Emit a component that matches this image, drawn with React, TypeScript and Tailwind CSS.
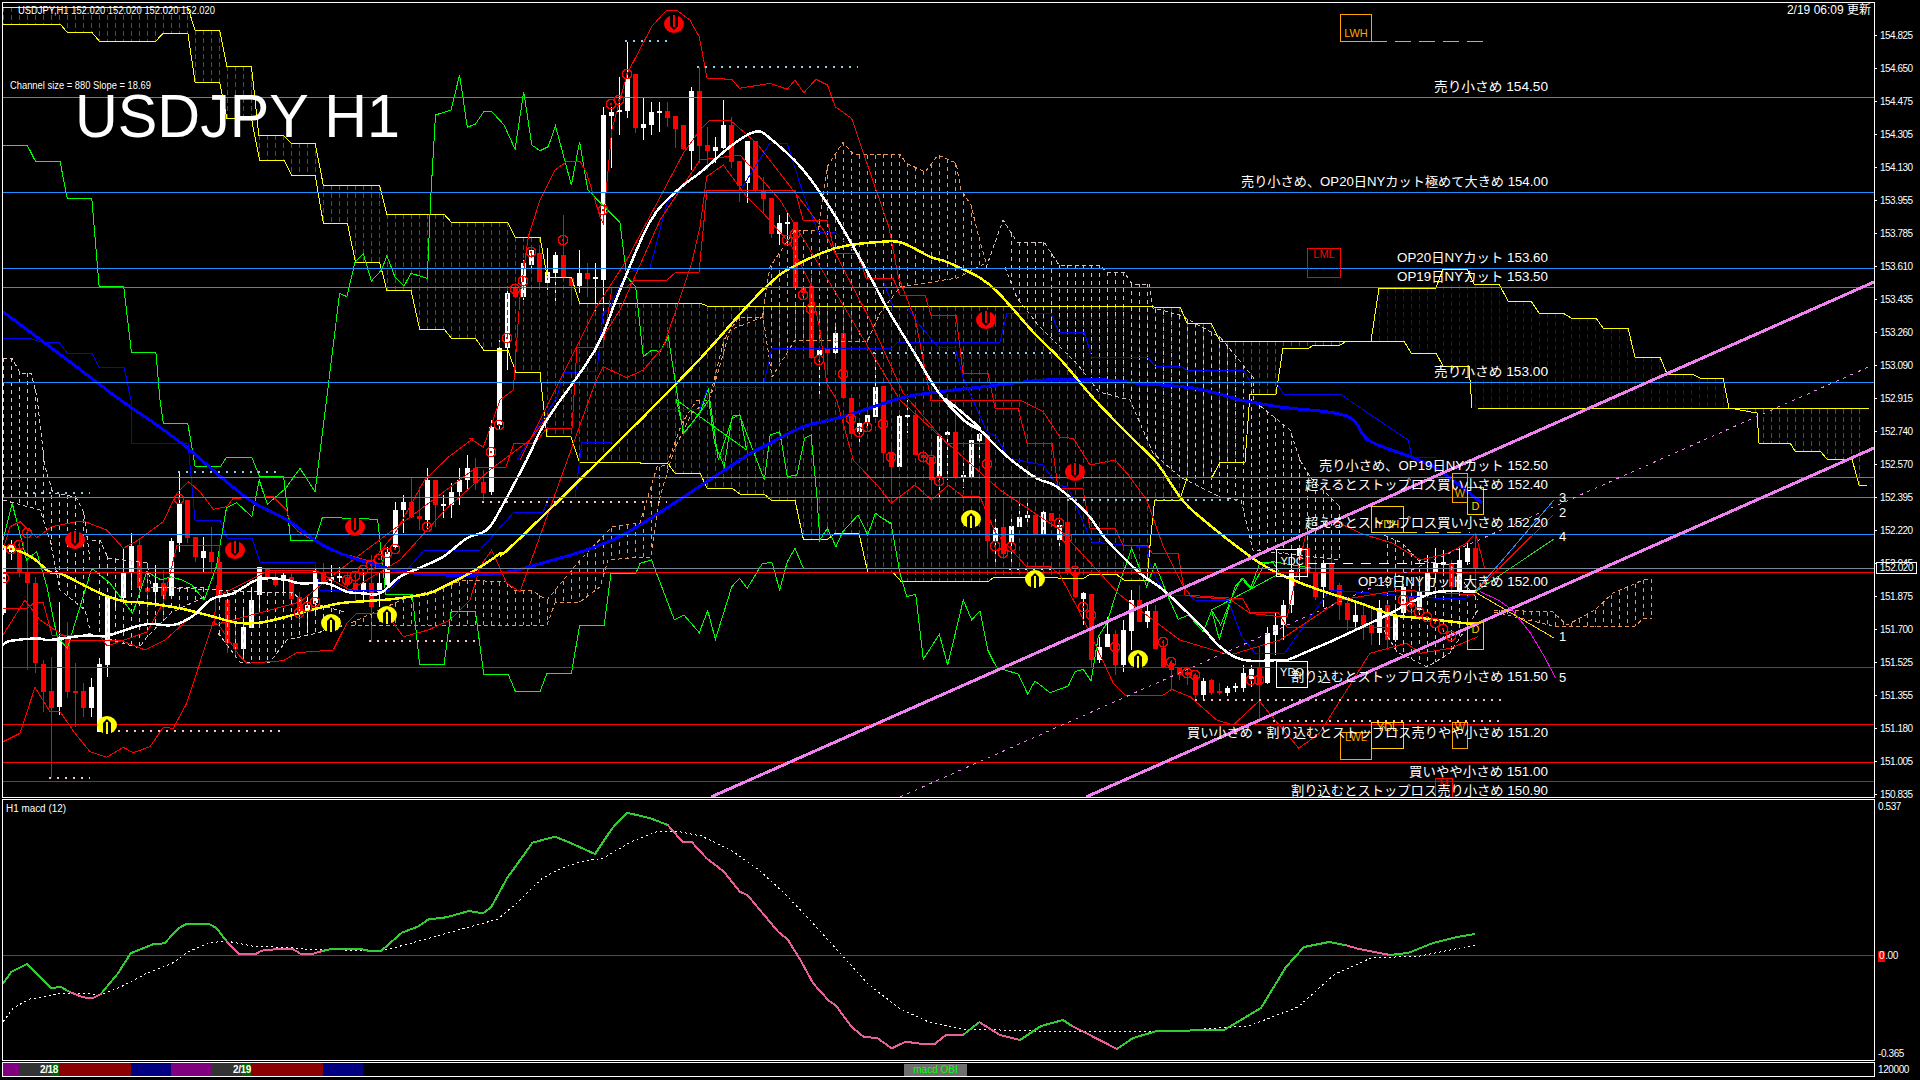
import React from "react";

type P = [number, number];

// the chart was read off crops of the screenshot, so the points stay in crop coordinates
const conv = (ox: number, oy: number, sx: number, n: number[]): P[] => {
  const out: P[] = [];
  for (let i = 0; i < n.length; i += 2) out.push([ox + n[i] / sx, oy + n[i + 1] / 3]);
  return out;
};
const z1 = (...n: number[]) => conv(0, 0, 2.45, n);
const z3 = (...n: number[]) => conv(1200, 440, 2.178, n);
const z6 = (...n: number[]) => conv(0, 400, 2.45, n);
const z7 = (...n: number[]) => conv(640, 0, 2.613, n);
const z8 = (...n: number[]) => conv(640, 400, 2.613, n);
const z9 = (...n: number[]) => conv(0, 470, 3, n);
const z10 = (...n: number[]) => conv(470, 30, 3, n);
const z11 = (...n: number[]) => conv(880, 400, 3, n);
const z12 = (...n: number[]) => conv(0, 800, 1.568, n);

const str = (p: P[]) => p.map(([x, y]) => `${x.toFixed(1)},${y.toFixed(1)}`).join(" ");

const interp = (p: P[], x: number) => {
  if (x <= p[0][0]) return p[0][1];
  for (let i = 1; i < p.length; i++) {
    if (x <= p[i][0]) {
      const [x0, y0] = p[i - 1];
      const [x1, y1] = p[i];
      return x1 === x0 ? y1 : y0 + ((y1 - y0) * (x - x0)) / (x1 - x0);
    }
  }
  return p[p.length - 1][1];
};

// moving averages are curves, so round off the digitised corners
const smooth = (p: P[]): P[] => {
  const out: P[] = [];
  for (let i = 0; i < p.length - 1; i++) {
    const a = p[Math.max(i - 1, 0)];
    const b = p[i];
    const c = p[i + 1];
    const d = p[Math.min(i + 2, p.length - 1)];
    for (let k = 0; k < 4; k++) {
      const t = k / 4;
      const f = (u: number, v: number, w: number, z: number) =>
        0.5 * (2 * v + (w - u) * t + (2 * u - 5 * v + 4 * w - z) * t * t + (3 * v - u - 3 * w + z) * t * t * t);
      out.push([f(a[0], b[0], c[0], d[0]), f(a[1], b[1], c[1], d[1])]);
    }
  }
  out.push(p[p.length - 1]);
  return out;
};

// x, body top, body bottom, high, low, 1 = white
const candles: number[][] = [
  [3, 547, 613, 545, 615, 1], [11, 545, 552, 540, 560, 1], [19, 548, 572, 542, 577, 0], [27, 573, 583, 530, 670, 0],
  [35, 583, 663, 577, 673, 0], [43, 664, 692, 660, 712, 0], [51, 691, 708, 657, 778, 0], [59, 637, 707, 602, 715, 1],
  [67, 638, 692, 622, 698, 0], [75, 691, 693, 663, 727, 0], [83, 691, 708, 683, 717, 0], [91, 687, 708, 678, 717, 1],
  [99, 664, 732, 658, 732, 1], [107, 597, 665, 597, 677, 1], [115, 598, 600, 590, 610, 1], [123, 572, 598, 548, 600, 1],
  [131, 546, 573, 533, 590, 1], [139, 545, 588, 540, 592, 0], [147, 588, 592, 575, 610, 0], [155, 583, 592, 565, 603, 1],
  [163, 583, 596, 570, 620, 0], [171, 541, 596, 538, 597, 1], [179, 503, 543, 472, 552, 1], [187, 500, 538, 500, 543, 0],
  [195, 537, 557, 537, 562, 0], [203, 551, 558, 537, 573, 1], [211, 552, 562, 527, 573, 0], [219, 562, 598, 558, 603, 0],
  [227, 600, 643, 600, 653, 0], [235, 643, 649, 625, 658, 0], [243, 627, 649, 610, 656, 1], [251, 600, 628, 587, 628, 1],
  [259, 567, 595, 567, 610, 1], [267, 568, 577, 568, 582, 0], [275, 577, 585, 570, 587, 0], [283, 575, 581, 572, 592, 1],
  [291, 577, 599, 573, 600, 0], [299, 597, 615, 592, 625, 0], [307, 605, 612, 597, 633, 1], [315, 571, 603, 563, 613, 1],
  [323, 572, 582, 563, 585, 0], [331, 577, 581, 565, 592, 1], [339, 576, 578, 567, 582, 1], [347, 577, 585, 573, 587, 0],
  [355, 583, 590, 573, 602, 0], [363, 583, 591, 572, 603, 1], [371, 583, 607, 555, 642, 0], [379, 583, 592, 573, 607, 1],
  [387, 552, 585, 547, 587, 1], [395, 510, 547, 502, 550, 1], [403, 502, 510, 495, 533, 1], [411, 502, 517, 477, 518, 0],
  [419, 516, 519, 487, 530, 0], [427, 480, 520, 468, 530, 1], [435, 480, 505, 480, 527, 0], [443, 504, 506, 495, 518, 1],
  [451, 492, 505, 483, 518, 1], [459, 480, 492, 468, 505, 1], [467, 468, 480, 455, 490, 1], [475, 468, 483, 458, 490, 0],
  [483, 482, 493, 470, 500, 0], [491, 427, 492, 420, 495, 1], [499, 348, 425, 340, 430, 1], [507, 293, 348, 290, 370, 1],
  [515, 287, 297, 283, 297, 0], [523, 263, 297, 260, 300, 1], [531, 250, 265, 247, 272, 1], [539, 253, 282, 250, 290, 0],
  [547, 272, 283, 248, 290, 1], [555, 255, 273, 252, 303, 1], [563, 255, 278, 215, 279, 0], [571, 278, 286, 277, 305, 0],
  [579, 273, 286, 250, 293, 1], [587, 273, 279, 263, 297, 0], [595, 277, 279, 263, 313, 1], [603, 115, 280, 107, 313, 1],
  [611, 112, 116, 107, 168, 1], [619, 110, 112, 77, 135, 1], [627, 78, 111, 42, 118, 1], [635, 74, 128, 74, 133, 0],
  [643, 124, 128, 98, 140, 1], [651, 112, 125, 102, 135, 1], [659, 111, 113, 102, 132, 1], [667, 111, 118, 102, 127, 0],
  [675, 116, 129, 116, 148, 0], [683, 125, 149, 125, 150, 0], [691, 91, 151, 87, 170, 1], [699, 91, 146, 67, 163, 0],
  [707, 145, 151, 127, 170, 0], [715, 147, 151, 137, 163, 1], [723, 125, 148, 100, 149, 1], [731, 125, 162, 117, 168, 0],
  [739, 161, 186, 161, 202, 0], [747, 141, 183, 141, 203, 1], [755, 141, 191, 141, 192, 0], [763, 191, 199, 177, 213, 0],
  [771, 198, 234, 198, 238, 0], [779, 223, 234, 215, 245, 1], [787, 222, 224, 212, 242, 1], [795, 222, 287, 222, 287, 0],
  [803, 287, 293, 287, 300, 0], [811, 286, 358, 275, 358, 0], [819, 350, 355, 348, 398, 1], [827, 349, 353, 332, 375, 0],
  [835, 333, 353, 322, 355, 1], [843, 333, 398, 313, 398, 0], [851, 398, 434, 398, 434, 0], [859, 423, 432, 420, 442, 1],
  [867, 415, 423, 408, 430, 1], [875, 387, 417, 353, 417, 1], [883, 386, 453, 386, 458, 0], [891, 452, 467, 447, 490, 0],
  [899, 416, 467, 413, 468, 1], [907, 415, 417, 400, 433, 1], [915, 415, 455, 415, 455, 0], [923, 455, 458, 452, 460, 0],
  [931, 457, 480, 457, 492, 0], [939, 436, 478, 436, 498, 1], [947, 432, 435, 428, 480, 1], [955, 432, 477, 413, 478, 0],
  [963, 475, 478, 463, 488, 1], [971, 440, 477, 440, 478, 1], [979, 434, 441, 433, 460, 1], [987, 435, 541, 435, 555, 0],
  [995, 528, 541, 515, 562, 1], [1003, 527, 554, 502, 555, 0], [1011, 526, 543, 515, 567, 1], [1019, 517, 527, 503, 527, 1],
  [1027, 515, 518, 503, 527, 1], [1035, 515, 535, 515, 535, 0], [1043, 512, 535, 507, 535, 1], [1051, 513, 521, 513, 521, 0],
  [1059, 525, 540, 520, 548, 1], [1067, 522, 573, 503, 573, 0], [1075, 572, 597, 568, 598, 0], [1083, 593, 599, 592, 625, 1],
  [1091, 594, 660, 594, 667, 0], [1099, 647, 660, 637, 663, 1], [1107, 634, 647, 617, 647, 1], [1115, 634, 665, 630, 675, 0],
  [1123, 630, 665, 620, 672, 1], [1131, 600, 631, 590, 650, 1], [1139, 600, 622, 585, 622, 0], [1147, 611, 622, 605, 628, 1],
  [1155, 611, 649, 605, 649, 0], [1163, 648, 667, 640, 668, 0], [1171, 663, 670, 660, 690, 0], [1179, 668, 675, 668, 680, 0],
  [1187, 672, 675, 668, 685, 0], [1195, 675, 695, 673, 700, 0], [1203, 681, 695, 678, 700, 1], [1211, 680, 693, 679, 695, 0],
  [1219, 691, 693, 683, 695, 0], [1227, 688, 693, 686, 696, 1], [1235, 686, 688, 683, 692, 1], [1243, 673, 688, 665, 692, 1],
  [1251, 669, 679, 665, 687, 1], [1259, 667, 684, 647, 720, 0], [1267, 633, 683, 627, 684, 1], [1275, 625, 635, 613, 655, 1],
  [1283, 605, 625, 600, 640, 1], [1291, 570, 605, 553, 613, 1], [1299, 548, 556, 545, 580, 1], [1307, 548, 573, 535, 578, 0],
  [1315, 572, 597, 560, 600, 0], [1323, 563, 587, 560, 607, 1], [1331, 564, 590, 550, 592, 0], [1339, 585, 605, 583, 620, 0],
  [1347, 603, 620, 600, 630, 0], [1355, 615, 622, 603, 630, 1], [1363, 615, 625, 603, 640, 0], [1371, 625, 633, 607, 645, 0],
  [1379, 608, 633, 600, 645, 1], [1387, 605, 640, 600, 650, 0], [1395, 615, 640, 605, 642, 1], [1403, 587, 613, 585, 618, 1],
  [1411, 597, 607, 590, 620, 0], [1419, 592, 610, 585, 615, 1], [1427, 572, 595, 555, 597, 1], [1435, 563, 572, 548, 580, 1],
  [1443, 562, 565, 550, 575, 1], [1451, 563, 587, 560, 597, 0], [1459, 560, 590, 548, 592, 1], [1467, 548, 562, 542, 565, 1],
  [1475, 548, 568, 533, 592, 0],
];

const rings: P[] = [
  [11, 549], [19, 545], [27, 533], [4, 578], [179, 499], [315, 602], [299, 613], [307, 607], [347, 580], [355, 576], [363, 570],
  [371, 565], [379, 559], [387, 553], [395, 549], [427, 527], [491, 452], [499, 425], [507, 338], [515, 289], [523, 281], [531, 252],
  [563, 240], [603, 210], [611, 104], [619, 100], [627, 74], [787, 240], [795, 234], [803, 295], [811, 309], [819, 360], [843, 374],
  [851, 419], [859, 432], [867, 427], [883, 424], [891, 457], [923, 457], [931, 460], [939, 481], [987, 464], [995, 546], [1003, 553],
  [1011, 547], [1059, 523], [1067, 538], [1075, 571], [1083, 607], [1091, 615], [1115, 647], [1163, 642], [1171, 662], [1187, 673],
  [1195, 675], [1251, 680], [1259, 680], [1403, 600], [1411, 607], [1419, 612], [1427, 617], [1435, 623], [1443, 629], [1451, 636],
];

const redMarks: P[] = [[75, 540], [235, 550], [355, 527], [674, 24], [986, 320], [1075, 472]];
const yellowMarks: P[] = [[107, 725], [331, 623], [387, 615], [971, 519], [1035, 579], [1138, 659]];

// cloud spans
const span1: P[] = [
  ...z1(7, 22, 460, 22, 478, 91, 538, 91, 556, 198, 616, 198, 634, 405, 694, 405, 714, 430, 772, 430, 792, 555, 930, 555, 948, 643, 1088, 643, 1106, 667, 1244, 667, 1262, 712, 1323, 712, 1341, 832, 1400, 832, 1420, 910),
  [580, 303], [700, 303], [707, 306], [1153, 306], [1155, 308], [1180, 307], [1187, 323], [1211, 323], [1220, 341], [1404, 341], [1411, 353], [1436, 353], [1443, 366], [1469, 366], [1472, 408], [1869, 409],
];
const span2: P[] = [
  ...z1(7, 72, 147, 72, 165, 97, 225, 97, 243, 123, 382, 123, 400, 99, 460, 99, 478, 247, 538, 247, 556, 355, 616, 355, 636, 481, 696, 481, 714, 525, 772, 525, 792, 669, 851, 669, 871, 787, 930, 787, 948, 871, 1007, 871, 1028, 987, 1088, 987, 1106, 1015, 1165, 1015, 1185, 1050, 1244, 1050, 1264, 1117, 1323, 1117),
  ...z6(1330, 0, 1340, 108, 1398, 108, 1420, 188, 1568, 188),
  ...z8(0, 190, 72, 190, 92, 220, 157, 220, 175, 264, 240, 264, 262, 283, 325, 283, 342, 300, 405, 300, 427, 418, 490, 418, 510, 400, 572, 400, 595, 516, 660, 516, 682, 544, 910, 544, 925, 532, 1160, 535, 1175, 523, 1245, 523, 1265, 541, 1325, 541, 1335, 405, 1345, 300, 1410, 300, 1430, 232, 1495, 232, 1515, 187, 1568, 187),
  [1245, 462], [1250, 394], [1276, 394], [1283, 348], [1309, 348], [1314, 345], [1340, 345], [1347, 341], [1371, 341], [1379, 288], [1436, 288], [1443, 269], [1467, 269], [1474, 284], [1499, 284], [1508, 301], [1531, 301], [1539, 313], [1563, 313], [1571, 318], [1596, 318], [1603, 328], [1628, 328], [1635, 357], [1660, 357], [1667, 374], [1692, 374], [1700, 378], [1723, 378], [1729, 408], [1757, 413], [1759, 443], [1790, 443], [1795, 451], [1820, 451], [1827, 459], [1852, 459], [1859, 485], [1867, 485],
];

const clouds: { top: P[]; bottom: P[]; color: string }[] = [
  { top: [[3, 358], [12, 358], [20, 373], [31, 373], [37, 397], [45, 467], [53, 493], [76, 497], [84, 513], [90, 560]], bottom: [[3, 500], [40, 510], [50, 540], [60, 590], [85, 610], [90, 630]], color: "#d8c8c8" },
  { top: [[92, 540], [100, 540], [108, 558], [147, 563], [151, 587], [204, 588]], bottom: [[88, 633], [139, 648], [147, 637], [171, 613], [204, 597]], color: "#d8c8c8" },
  { top: [[177, 588], [257, 592], [293, 592], [300, 600], [345, 612]], bottom: [[218, 633], [240, 662], [270, 662], [287, 640], [317, 633], [345, 625]], color: "#d8c8c8" },
  { top: [[351, 623], [408, 597], [424, 593], [445, 587], [463, 580], [506, 582], [514, 590], [531, 590], [547, 600], [580, 560], [612, 527], [640, 523], [657, 467], [667, 465], [682, 423], [697, 400], [709, 400]], bottom: [[351, 625], [547, 625], [555, 603], [580, 602], [600, 587], [608, 560], [642, 557], [651, 557], [659, 500], [674, 450], [692, 413], [709, 400]], color: "#e8995a" },
  { top: [[709, 400], [724, 340], [739, 317], [762, 317], [770, 267], [795, 230], [818, 230], [827, 167], [843, 142], [854, 155], [900, 154], [906, 163], [925, 172], [938, 155], [956, 163], [961, 190], [971, 205], [977, 230], [986, 263]], bottom: [[709, 400], [715, 383], [730, 330], [763, 317], [772, 377], [795, 340], [867, 342], [880, 313], [900, 287], [957, 278], [986, 263]], color: "#e8995a" },
  { top: [[986, 268], [1003, 220], [1017, 242], [1044, 242], [1059, 265], [1099, 265], [1107, 272], [1124, 272], [1132, 284], [1149, 284], [1153, 308], [1180, 315], [1220, 337], [1253, 377], [1253, 400], [1290, 430], [1300, 460], [1310, 477], [1340, 507]], bottom: [[1005, 267], [1017, 298], [1038, 325], [1078, 365], [1099, 392], [1130, 400], [1153, 453], [1180, 477], [1220, 497], [1241, 500], [1253, 550], [1340, 560]], color: "#d0c0c0" },
  { top: [[1384, 535], [1402, 543], [1418, 560], [1450, 565], [1478, 600]], bottom: [[1384, 630], [1397, 652], [1427, 667], [1450, 653], [1478, 610]], color: "#d0c0c0" },
  { top: [[1494, 610], [1553, 612], [1567, 625], [1595, 610], [1613, 593], [1625, 588], [1643, 580], [1652, 579]], bottom: [[1494, 612], [1558, 627], [1636, 626], [1643, 618], [1652, 618]], color: "#e8995a" },
];

const barXs = Array.from({ length: 233 }, (_, i) => 3 + 8 * i);

const kumoDashes = (() => {
  let red = "";
  let blue = "";
  for (const x of barXs) {
    if (x > 1869) break;
    const a = interp(span1, x);
    const b = interp(span2, x);
    if (Math.abs(a - b) < 2) continue;
    const seg = `M${x + 0.5} ${Math.min(a, b).toFixed(0)}V${Math.max(a, b).toFixed(0)}`;
    if (x >= 1379 && x <= 1729) blue += seg;
    else red += seg;
  }
  return { red, blue };
})();

const cloudDashes = (top: P[], bottom: P[]) => {
  let d = "";
  for (const x of barXs) {
    if (x < top[0][0] || x > top[top.length - 1][0]) continue;
    if (x < bottom[0][0] || x > bottom[bottom.length - 1][0]) continue;
    const a = interp(top, x);
    const b = interp(bottom, x);
    if (b - a > 2) d += `M${x + 0.5} ${a.toFixed(0)}V${b.toFixed(0)}`;
  }
  return d;
};

const stepGreen = [
  ...z1(7, 436, 67, 436, 87, 484, 147, 484, 165, 595, 225, 595, 243, 860, 303, 860, 322, 1057, 382, 1057, 392, 1200),
  ...z6(400, 70, 460, 70, 478, 200, 540, 200, 555, 172, 617, 172, 636, 230, 695, 230, 712, 420, 772, 420, 790, 352, 925, 358, 945, 582, 1010, 582, 1028, 793, 1088, 793, 1105, 635, 1165, 635, 1185, 823, 1245, 823, 1263, 875, 1323, 875, 1340, 820, 1400, 820, 1420, 677, 1480, 677, 1497, 520, 1558, 520),
  ...z8(0, 490, 30, 480, 90, 660, 115, 645, 155, 698, 177, 632, 197, 718, 240, 560, 260, 535, 280, 565, 320, 490, 345, 488, 365, 570, 385, 485, 405, 445, 427, 505, 447, 505),
];
const chikou = [
  ...z6(7, 420, 30, 310, 65, 480, 90, 455, 115, 560, 140, 710, 165, 745, 225, 505, 270, 550, 325, 640, 360, 515, 395, 540, 420, 530, 445, 540, 470, 555, 500, 600, 530, 500, 555, 323, 580, 308, 617, 350, 635, 240, 655, 313, 700, 265, 735, 205, 772, 275, 800, 0),
  ...z1(832, 880, 850, 890, 870, 785, 890, 762, 910, 843, 935, 810, 948, 767, 968, 832, 990, 858, 1007, 820, 1047, 835, 1055, 600, 1067, 345, 1105, 330, 1126, 225, 1145, 382, 1165, 372, 1185, 335, 1205, 335, 1235, 375, 1262, 448, 1283, 275, 1303, 435, 1323, 452, 1343, 440, 1361, 378, 1400, 555, 1420, 425, 1440, 570),
  ...z10(450, 578, 470, 740, 497, 770, 520, 980, 545, 960, 570, 965, 595, 920, 640, 1210, 690, 1150, 715, 1075, 745, 1290, 790, 1155, 810, 1155, 830, 1260),
  ...z8(95, 0, 115, 100, 155, 40, 180, 0, 195, 130, 220, 200, 240, 55, 260, 45, 300, 165, 325, 240, 340, 105, 365, 95, 385, 230, 410, 225, 430, 115, 447, 105, 462, 285, 470, 420, 490, 385, 512, 440, 530, 395, 570, 345, 595, 405, 615, 340, 655, 372),
  ...z11(0, 350, 33, 370, 60, 520, 80, 590, 107, 583, 130, 778, 178, 703, 203, 795, 250, 600, 275, 660, 300, 632, 323, 750, 350, 803, 415, 822, 443, 882, 465, 843, 510, 878, 565, 858, 585, 815, 610, 808, 633, 843, 655, 710, 680, 670, 715, 560, 755, 445, 800, 560, 825, 490, 860, 580, 895, 658, 925, 645, 970, 695, 995, 632, 1018, 718, 1065, 560, 1090, 535, 1115, 565, 1155, 490, 1180, 488, 1200, 520),
  ...z3(25, 510, 45, 555, 70, 470, 90, 415, 110, 445, 130, 370, 160, 365, 245, 385),
];

const bbUpper = [
  ...z9(9, 240, 30, 170, 60, 155, 110, 203, 155, 170, 230, 155, 255, 155, 320, 180, 370, 235, 415, 210, 490, 155, 530, 70, 565, 35, 600, 65, 640, 118, 680, 110, 700, 85, 820, 80, 860, 120, 870, 155, 895, 185, 990, 240, 1080, 265, 1115, 275, 1185, 190),
  ...z6(1040, 240, 1100, 170, 1160, 115),
  ...z10(0, 1225, 40, 1252, 90, 1110, 130, 1080, 150, 800, 175, 620, 210, 510, 255, 420, 290, 395, 330, 393, 350, 430, 390, 560, 400, 580, 425, 300, 472, 130, 540, 0),
  ...z7(30, 80, 70, 30, 95, 30, 130, 60, 155, 110, 175, 235, 240, 238, 260, 265, 340, 250, 385, 268, 405, 240, 428, 278, 460, 238, 490, 255, 510, 320, 553, 355, 590, 480, 650, 680, 675, 830, 720, 960, 760, 1200),
  ...z11(420, 0, 490, 35, 540, 112, 580, 115, 630, 195, 705, 180, 745, 225, 800, 300, 850, 440, 910, 560, 935, 590, 1050, 598, 1110, 640, 1200, 650),
  ...z3(190, 530, 230, 285, 290, 240, 350, 280, 420, 310, 480, 360, 540, 340, 580, 310, 600, 280, 620, 385),
];
const bbLower = [
  ...z9(9, 815, 60, 790, 105, 652, 150, 725, 180, 725, 225, 790, 270, 845, 320, 862, 370, 832, 400, 848, 450, 830, 490, 772, 520, 775, 560, 700, 640, 455, 660, 470, 720, 560, 740, 580, 850, 572, 890, 548, 1000, 540, 1040, 460, 1070, 430, 1130, 430, 1165, 440, 1210, 500, 1285, 480, 1350, 450, 1410, 390, 1440, 290, 1475, 240, 1520, 340, 1560, 365),
  ...z10(375, 1060, 400, 1010, 470, 1043, 520, 1020, 580, 950, 625, 820, 665, 700, 690, 590, 710, 440, 760, 405, 830, 500, 880, 550, 960, 640, 1020, 760, 1050, 900, 1070, 1060, 1100, 1110, 1150, 1290),
  ...z11(0, 265, 33, 310, 105, 255, 155, 300, 205, 255, 250, 290, 300, 290, 345, 395, 440, 500, 510, 500, 540, 525, 585, 610, 630, 700, 700, 850, 735, 885, 850, 885, 875, 868, 930, 890, 1010, 960, 1060, 975, 1140, 900),
  ...z3(130, 785, 215, 925, 260, 880, 370, 640, 450, 610, 480, 640, 545, 625, 605, 590),
];
const redSteps: P[] = [
  [3, 608], [28, 608], [35, 602], [43, 602], [52, 635], [100, 636], [107, 646], [147, 632], [163, 603], [177, 545], [195, 545], [220, 545], [214, 625], [170, 625], [214, 625], [300, 602], [337, 572], [477, 467], [506, 467], [514, 443], [535, 443], [547, 428], [572, 428], [577, 347], [603, 347], [612, 287], [627, 287], [635, 280], [667, 280], [676, 272], [699, 272], [707, 190], [795, 190], [803, 220], [827, 220], [835, 253], [858, 253], [866, 278], [893, 278], [900, 295], [925, 295], [931, 315], [956, 315], [963, 373], [988, 373], [995, 408], [1018, 408], [1027, 443], [1052, 443], [1058, 488], [1083, 489], [1090, 528], [1115, 528], [1123, 545], [1147, 545], [1152, 553], [1178, 553], [1185, 595], [1243, 599], [1250, 612], [1278, 612], [1287, 627], [1393, 627],
];
const redMid = z10(150, 1290, 380, 830, 470, 690, 640, 370, 690, 300, 720, 270, 780, 270, 860, 340, 1000, 520, 1060, 600, 1200, 870, 1300, 1090, 1430, 1240, 1560, 1240);
const redMid2: P[] = [[3, 635], [25, 600], [40, 620], [70, 640], [120, 640], [145, 650], [165, 640], [210, 600], [270, 570], [315, 570], [350, 590], [400, 560], [445, 510], [490, 470], [530, 440], [575, 380], [620, 310], [660, 220], [700, 160], [740, 155], [780, 200], [840, 300], [900, 400], [955, 450], [1000, 490], [1060, 530], [1120, 595], [1180, 640], [1230, 655], [1280, 640], [1340, 600], [1400, 590], [1475, 595]];

const blueStep: P[] = [
  [3, 338], [29, 338], [41, 342], [59, 342], [67, 353], [92, 353], [99, 367], [124, 367], [131, 400], [131, 443], [188, 443], [195, 520], [220, 520], [227, 538], [252, 538], [260, 562], [315, 562], [320, 590], [390, 590], [424, 550], [480, 550], [514, 512], [543, 512], [549, 497], [575, 497], [582, 442], [611, 442], [611, 409], [700, 409], [708, 387], [763, 387], [772, 348], [892, 348], [898, 342], [1000, 342], [1007, 313], [1051, 313], [1059, 332], [1084, 332], [1092, 357], [1147, 357], [1155, 366], [1180, 366], [1187, 370], [1243, 370], [1250, 381], [1276, 381], [1283, 394], [1340, 394], [1408, 440], [1412, 457], [1436, 457],
];
const blueFast: P[] = [
  [517, 460], [557, 397], [563, 373], [597, 371], [603, 313], [608, 310], [627, 272], [650, 268], [667, 203], [677, 191], [740, 191], [770, 143], [787, 143], [803, 193], [818, 232], [835, 232], [860, 257], [875, 272], [883, 280], [893, 307], [907, 307], [918, 323], [938, 347], [955, 347], [963, 377], [987, 432], [997, 437], [1008, 458], [1043, 465], [1057, 485], [1068, 487], [1080, 515], [1092, 542], [1147, 547], [1150, 563], [1157, 580], [1167, 595], [1188, 595], [1195, 600], [1228, 600], [1242, 637], [1255, 653], [1285, 653], [1296, 637], [1330, 590], [1434, 598], [1466, 598], [1475, 592],
];

const whiteMa = smooth([
  ...z9(9, 525, 30, 513, 110, 505, 150, 510, 250, 497, 320, 497, 400, 472, 450, 462, 520, 465, 580, 437, 635, 387, 700, 370, 775, 328, 850, 328, 900, 340, 980, 340, 1040, 365, 1090, 370, 1140, 370, 1200, 320, 1260, 293, 1330, 260, 1400, 205, 1460, 180, 1500, 120),
  ...z10(170, 1290, 230, 1170, 375, 960, 450, 780, 540, 575, 620, 483, 700, 420, 780, 350, 855, 305, 900, 325, 1000, 420, 1100, 565, 1200, 740, 1260, 850, 1340, 980, 1400, 1080, 1480, 1170, 1530, 1195),
  ...z11(200, 0, 250, 60, 300, 90, 350, 140, 400, 185, 470, 235, 530, 260, 620, 340, 680, 420, 780, 520, 850, 570, 960, 675, 1020, 740, 1090, 780, 1200, 780),
  ...z3(190, 660, 250, 625, 300, 595, 400, 530, 470, 480, 520, 455, 600, 455),
]);
const yellowMa = smooth([
  ...z9(9, 230, 50, 240, 100, 265, 150, 307, 180, 310, 260, 350, 320, 378, 380, 395, 430, 398, 540, 415, 640, 440, 710, 458, 780, 458, 860, 440, 940, 418, 1020, 400, 1100, 393, 1180, 387, 1260, 375, 1300, 365, 1390, 320, 1450, 285, 1500, 250, 1560, 205),
  ...z10(620, 1060, 830, 830, 900, 760, 960, 715, 1095, 655, 1240, 635, 1300, 640, 1380, 680, 1440, 700, 1560, 765),
  [1034, 333], [1061, 360], [1095, 400], [1134, 440], [1157, 463], [1180, 497], [1200, 517],
  ...z3(100, 340, 170, 400, 250, 445, 350, 490, 420, 525, 490, 535, 580, 550, 600, 548),
]);
const blueMa = smooth([
  ...z1(7, 935, 100, 1020, 230, 1140),
  ...z6(295, 0, 440, 125, 600, 290, 710, 365, 790, 435, 880, 480, 990, 515, 1090, 525, 1225, 520, 1340, 485, 1460, 440, 1568, 375),
  ...z10(810, 1290, 900, 1240, 1000, 1190, 1120, 1160, 1290, 1105, 1410, 1085, 1560, 1068),
  ...z7(1060, 1140, 1220, 1140, 1300, 1150, 1450, 1165, 1568, 1200),
  [1240, 400], [1280, 407], [1347, 416], [1368, 440], [1411, 457], [1439, 470], [1482, 503],
]);

const macdA = z12(5, 550, 18, 515, 42, 492, 65, 535, 80, 565, 95, 560, 108, 575);
const macdB = z12(108, 575, 130, 592, 145, 595, 158, 582);
const macdC = z12(158, 582, 185, 520, 205, 460, 240, 433, 258, 430, 280, 385, 292, 372, 328, 372, 340, 385, 355, 423);
const macdD = z12(355, 423, 375, 462, 400, 463, 410, 452, 440, 446, 458, 446, 472, 462, 488, 463, 505, 453);
const macdE = z12(505, 453, 520, 447, 565, 447, 580, 453, 598, 452, 630, 398, 655, 380, 672, 358, 700, 352, 735, 333, 757, 340, 770, 322, 795, 235, 835, 128, 870, 110, 890, 125, 933, 162, 960, 85, 983, 38, 1020, 55, 1047, 75);
const macdF = z12(1047, 75, 1070, 125, 1085, 127, 1108, 175, 1135, 215, 1160, 275, 1172, 285, 1220, 395, 1235, 418, 1255, 480, 1275, 550, 1300, 603, 1310, 615, 1335, 680, 1355, 712, 1375, 713, 1398, 745, 1420, 725, 1450, 733, 1465, 733, 1483, 705, 1510, 705);
const macdG = z12(1510, 705, 1535, 667);
const macdH: P[] = [[979, 1022], [1000, 1035], [1020, 1040]];
const macdI: P[] = [[1020, 1040], [1041, 1026], [1063, 1020], [1072, 1026]];
const macdJ: P[] = [[1072, 1026], [1084, 1032], [1117, 1049]];
const macdK: P[] = [[1117, 1049], [1133, 1038], [1157, 1031], [1224, 1030], [1261, 1008], [1286, 967], [1304, 947], [1329, 942], [1345, 945]];
const macdL: P[] = [[1345, 945], [1359, 949], [1390, 955]];
const macdM: P[] = [[1390, 955], [1408, 953], [1433, 943], [1457, 937], [1475, 934]];
const signal = [
  ...z12(5, 665, 20, 625, 45, 598, 95, 580, 160, 583, 190, 560, 230, 520, 270, 490, 295, 455, 330, 428, 355, 423, 395, 438, 460, 443, 480, 448, 600, 452, 640, 432, 700, 400, 780, 358, 810, 310, 850, 235, 880, 205, 910, 185, 945, 175, 990, 125, 1030, 95, 1060, 93, 1100, 108, 1150, 155, 1190, 210, 1230, 280, 1270, 360, 1320, 465, 1360, 550, 1410, 625, 1455, 665, 1510, 688, 1568, 690),
  [1065, 1032], [1175, 1031], [1249, 1026], [1298, 1007], [1335, 974], [1371, 958], [1420, 956], [1475, 945],
] as P[];

const blueLevels = [97, 192, 268, 287, 382, 477, 497, 534];
const redLevels = [572, 667, 724, 762, 781];

const labels: [string, number, number, number][] = [
  ["売り小さめ 154.50", 1434, 114, 88],
  ["売り小さめ、OP20日NYカット極めて大きめ 154.00", 1241, 307, 182.5],
  ["OP20日NYカット 153.60", 1397, 151, 258.5],
  ["OP19日NYカット 153.50", 1397, 151, 277.5],
  ["売り小さめ 153.00", 1434, 114, 373],
  ["売り小さめ、OP19日NYカット 152.50", 1319, 229, 467],
  ["超えるとストップロス買い小さめ 152.40", 1305, 243, 486],
  ["超えるとストップロス買い小さめ 152.20", 1305, 243, 524],
  ["OP19日NYカット大きめ 152.00", 1358, 190, 583],
  ["割り込むとストップロス売り小さめ 151.50", 1291, 257, 678],
  ["買い小さめ・割り込むとストップロス売りやや小さめ 151.20", 1187, 361, 734],
  ["買いやや小さめ 151.00", 1409, 139, 773],
  ["割り込むとストップロス売り小さめ 150.90", 1291, 257, 792],
];

const boxes: [string, number, number, number, number, string, number][] = [
  ["LWH", 1340, 14, 31, 27, "#ffa500", 34],
  ["LML", 1307, 248, 33, 29, "#ff0000", 255],
  ["W", 1452, 473, 15, 29, "#ffa500", 494],
  ["D", 1467, 487, 16, 27, "#ffd000", 507],
  ["YDH", 1371, 506, 32, 26, "#ffd000", 525],
  ["YDC", 1276, 549, 31, 27, "#ffffff", 562],
  ["YDO", 1276, 661, 31, 26, "#ffffff", 673],
  ["LWL", 1340, 732, 31, 27, "#ffa500", 738],
  ["YDL", 1371, 722, 32, 26, "#ffd000", 728],
  ["W", 1452, 722, 15, 26, "#ffa500", 728],
  ["D", 1467, 622, 16, 27, "#ffd000", 630],
  ["M", 1435, 778, 17, 19, "#ff0000", 785],
];

// dotted swing levels: x1, x2, y, colour
const dots: [number, number, number, string][] = [
  [625, 667, 41, "#87ceeb"], [697, 858, 67, "#87ceeb"], [25, 90, 493, "#87ceeb"], [178, 282, 472, "#87ceeb"], [873, 1057, 353, "#87ceeb"], [1067, 1240, 500, "#87ceeb"],
  [102, 282, 731, "#ffc0cb"], [49, 90, 778, "#ffc0cb"], [369, 475, 641, "#ffc0cb"], [482, 667, 502, "#ffc0cb"], [1195, 1505, 700, "#ffc0cb"], [1273, 1505, 721, "#ffc0cb"], [1009, 1051, 569, "#ffe4e1"],
];

const priceTicks = ["154.825", "154.650", "154.475", "154.305", "154.130", "153.955", "153.785", "153.610", "153.435", "153.260", "153.090", "152.915", "152.740", "152.570", "152.395", "152.220", "152.045", "151.875", "151.700", "151.525", "151.355", "151.180", "151.005", "150.835"];

const font = { fontFamily: '"Liberation Sans", "Noto Sans CJK JP", sans-serif' };

function Line({ p, c, w = 1, dash }: { p: P[]; c: string; w?: number; dash?: string }) {
  return <polyline points={str(p)} fill="none" stroke={c} strokeWidth={w} strokeDasharray={dash} />;
}

function Mark({ x, y, color, up }: { x: number; y: number; color: string; up?: boolean }) {
  return (
    <g transform={`translate(${x} ${y}) scale(1 ${up ? -1 : 1})`}>
      <ellipse rx="10" ry="9" fill={color} />
      <path d="M-4 -10 L-4 2 L0 6 L4 2 L4 -10 Z" fill="#000" />
      <path d="M0 -9 L0 3" stroke={color} strokeWidth="2" />
    </g>
  );
}

function MainChart() {
  return (
    <svg width="1871" height="794" viewBox="3 3 1871 794" className="block" style={font}>
      <g shapeRendering="crispEdges">
        {candles.map(([x, top, bottom, high, low, white]) => {
          const c = white ? "#ffffff" : "#ff0000";
          return (
            <g key={x}>
              <path d={`M${x + 0.5} ${high}V${low}`} stroke={c} />
              <rect x={x - 2} y={top} width="5" height={Math.max(bottom - top, 2)} fill={c} />
            </g>
          );
        })}
        <path d={kumoDashes.red} stroke="#ff0000" strokeDasharray="5 3" />
        <path d={kumoDashes.blue} stroke="#0000ff" strokeDasharray="5 3" />
        {clouds.map((c, i) => (
          <g key={i}>
            <path d={cloudDashes(c.top, c.bottom)} stroke={c.color} strokeDasharray="4 4" />
            <Line p={c.top} c={c.color} dash="4 3" />
            <Line p={c.bottom} c={c.color} dash="4 3" />
          </g>
        ))}
        <Line p={span1} c="#ffff00" />
        <Line p={span2} c="#ffff00" />
        <Line p={stepGreen} c="#00ff00" />
        <Line p={chikou} c="#00ff00" />
        <Line p={blueStep} c="#0000ff" />
        <Line p={blueFast} c="#0000ff" />
        <Line p={bbUpper} c="#ff0000" />
        <Line p={bbLower} c="#ff0000" />
        <Line p={redSteps} c="#ff0000" />
        <Line p={redMid} c="#ff0000" />
        <Line p={redMid2} c="#ff0000" />
        <Line p={blueMa} c="#0000ff" w={3} />
        <Line p={yellowMa} c="#ffff00" w={2.5} />
        <Line p={whiteMa} c="#ffffff" w={2.5} />
        {dots.map(([x1, x2, y, c]) => (
          <path key={`${x1}-${y}`} d={`M${x1} ${y}H${x2}`} stroke={c} strokeWidth="2" strokeDasharray="2 6" />
        ))}
        <path d="M1307 563H1470" stroke="#ffffff" strokeDasharray="10 8" />
        <path d="M1403 532H1470" stroke="#ffd000" strokeDasharray="14 8" />
        <path d="M1371 41H1483" stroke="#ffa500" strokeDasharray="16 8" />
        {blueLevels.map((y) => (
          <path key={y} d={`M3 ${y + 0.5}H1874`} stroke="#1e90ff" />
        ))}
        {redLevels.map((y) => (
          <path key={y} d={`M3 ${y + 0.5}H1874`} stroke="#ff0000" />
        ))}
        <path d="M3 568.5H1874" stroke="#778899" />
        <Line p={[[711, 797], [1874, 282]]} c="#ee82ee" w={3} />
        <Line p={[[1086, 797], [1874, 448]]} c="#ee82ee" w={3} />
        <Line p={[[900, 797], [1873, 365]]} c="#ee82ee" dash="3 5" />
        <Line p={[[1475, 592], [1554, 638]]} c="#ffd700" />
        <Line p={[[1475, 592], [1553, 515]]} c="#ff0000" />
        <Line p={[[1475, 592], [1554, 500]]} c="#1e90ff" />
        <Line p={[[1475, 592], [1554, 539]]} c="#32cd32" />
        <Line p={z3(610, 455, 650, 480, 680, 510, 720, 580, 750, 650, 775, 715)} c="#ff00ff" />
        {rings.map(([x, y]) => (
          <g key={`${x}-${y}`}>
            <circle cx={x} cy={y} r="4.5" fill="none" stroke="#ff0000" strokeWidth="1.5" />
            <rect x={x - 1} y={y - 1} width="2" height="2" fill="#ff0000" />
          </g>
        ))}
        {boxes.map(([, x, y, w, h, c], i) => (
          <rect key={i} x={x + 0.5} y={y + 0.5} width={w} height={h} fill="none" stroke={c} />
        ))}
      </g>
      {redMarks.map(([x, y]) => (
        <Mark key={x} x={x} y={y} color="#ff0000" />
      ))}
      {yellowMarks.map(([x, y]) => (
        <Mark key={x} x={x} y={y} color="#ffff00" up />
      ))}
      {boxes.map(([t, x, , w, , c, ty], i) => (
        <text key={i} x={x + w / 2 + 0.5} y={ty} fill={c} fontSize="11" textAnchor="middle" dominantBaseline="middle">
          {t}
        </text>
      ))}
      {labels.map(([t, x, w, y]) => (
        <text key={t + y} x={x} y={y} fill="#ffffff" fontSize="13" dominantBaseline="middle" textLength={w} lengthAdjust="spacingAndGlyphs">
          {t}
        </text>
      ))}
      {[["3", 499], ["2", 514], ["4", 538], ["1", 638], ["5", 679]].map(([t, y]) => (
        <text key={t} x="1559" y={y} fill="#ffffff" fontSize="13" dominantBaseline="middle">
          {t}
        </text>
      ))}
      <text x="18" y="11" fill="#ffffff" fontSize="10" dominantBaseline="middle" textLength="197" lengthAdjust="spacingAndGlyphs">
        USDJPY,H1  152.020 152.020 152.020 152.020
      </text>
      <text x="10" y="86" fill="#ffffff" fontSize="10" dominantBaseline="middle" textLength="141" lengthAdjust="spacingAndGlyphs">
        Channel size = 880 Slope = 18.69
      </text>
      <text x="75" y="137" fill="#ffffff" fontSize="62" textLength="325" lengthAdjust="spacingAndGlyphs">
        USDJPY H1
      </text>
      <text x="1871" y="11" fill="#ffffff" fontSize="12" textAnchor="end" dominantBaseline="middle">
        2/19 06:09 更新
      </text>
    </svg>
  );
}

function MacdChart() {
  const green = "#32cd32";
  const pink = "#e8609a";
  return (
    <svg width="1871" height="260" viewBox="3 800 1871 260" className="block" style={font}>
      <g shapeRendering="crispEdges">
        <path d="M3 955.5H1874" stroke="#ff0000" />
        <Line p={signal} c="#ffffff" dash="2 3" />
        {[macdA, macdC, macdE, macdG, macdI, macdK, macdM].map((p, i) => (
          <Line key={i} p={p} c={green} w={2} />
        ))}
        {[macdB, macdD, macdF, macdH, macdJ, macdL].map((p, i) => (
          <Line key={i} p={p} c={pink} w={2} />
        ))}
      </g>
      <text x="6" y="809" fill="#ffffff" fontSize="10" dominantBaseline="middle" textLength="60" lengthAdjust="spacingAndGlyphs">
        H1  macd (12)
      </text>
    </svg>
  );
}

const bands = [
  { w: "w-[16px]", bg: "bg-[#800080]" },
  { w: "w-[32px]", bg: "bg-[#333333]" },
  { w: "w-[8px]", bg: "bg-[#006400]" },
  { w: "w-[72px]", bg: "bg-[#8b0000]" },
  { w: "w-[40px]", bg: "bg-[#000080]" },
  { w: "w-[41px]", bg: "bg-[#800080]" },
  { w: "w-[30px]", bg: "bg-[#333333]" },
  { w: "w-[9px]", bg: "bg-[#006400]" },
  { w: "w-[72px]", bg: "bg-[#8b0000]" },
  { w: "w-[40px]", bg: "bg-[#000080]" },
];

export default function App() {
  return (
    <div className="relative h-[1080px] w-[1920px] overflow-hidden bg-black pl-[2px] pt-[2px] text-white" style={font}>
      <div className="flex h-[796px]">
        <div className="h-full w-[1873px] border border-white">
          <MainChart />
        </div>
        <div className="relative flex-1 pt-[17px]">
          {priceTicks.map((t) => (
            <div key={t} className="flex h-[33px] items-center">
              <span className="mr-[3px] h-px w-[2px] bg-white" />
              <span className="text-[10px] leading-none tracking-[-0.5px]">{t}</span>
            </div>
          ))}
          <div className="absolute left-[1px] top-[560px] flex h-[12px] w-[41px] items-center justify-center border border-white bg-black text-[10px] leading-none tracking-[-0.4px]">
            152.020
          </div>
        </div>
      </div>
      <div className="mt-px flex h-[262px]">
        <div className="h-full w-[1873px] border border-white">
          <MacdChart />
        </div>
        <div className="flex flex-1 flex-col pl-[3px] pt-[3px] text-[10px] leading-none tracking-[-0.4px]">
          <span className="h-[10px]">0.537</span>
          <span className="mt-[139px] h-[10px]">
            <span className="inline-block h-[11px] bg-[#ff0000] px-[1px]">0</span>.00
          </span>
          <span className="mt-[88px] h-[10px]">-0.365</span>
        </div>
      </div>
      <div className="mt-px flex h-[15px]">
        <div className="flex h-full w-[1873px] border border-white">
          {bands.map((b, i) => (
            <div key={i} className={`relative h-full ${b.w} ${b.bg}`} />
          ))}
          <div className="ml-[541px] mt-[1px] flex h-[12px] w-[63px] items-center justify-center bg-[#6e6e6e] text-[10px] leading-none text-[#00ff00]">
            macd OBI
          </div>
          <span className="absolute left-[40px] top-[1065px] text-[10px] font-bold leading-none tracking-[-0.4px]">2/18</span>
          <span className="absolute left-[233px] top-[1065px] text-[10px] font-bold leading-none tracking-[-0.4px]">2/19</span>
        </div>
        <div className="flex flex-1 items-center pl-[3px] text-[10px] leading-none tracking-[-0.4px]">120000</div>
      </div>
    </div>
  );
}
